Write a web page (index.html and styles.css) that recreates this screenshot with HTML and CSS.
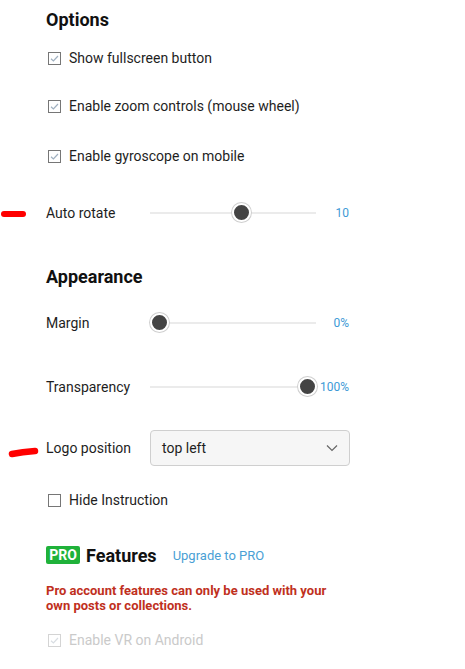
FILE: index.html
```html
<!DOCTYPE html>
<html>
<head>
<meta charset="utf-8">
<link rel="stylesheet" href="styles.css">
</head>
<body>
<div class="page">
  <svg class="mark mark-rotate" width="28" height="10" viewBox="0 0 28 10"><path d="M4 5 L23 5" stroke="#f00" stroke-width="6" stroke-linecap="round"/></svg>
  <svg class="mark mark-logo" width="32" height="12" viewBox="0 0 32 12"><path d="M4 8 Q14 6 27 5" stroke="#f00" stroke-width="6.5" stroke-linecap="round" fill="none"/></svg>

  <h2 class="heading first">Options</h2>

  <label class="check c1">
    <svg class="box" width="13" height="13" viewBox="0 0 13 13"><rect x="0.5" y="0.5" width="12" height="12" fill="#fff" stroke="#767676"/><path d="M3 6.8 L5.4 9 L10 4" fill="none" stroke="#9fb0c0" stroke-width="1.2"/></svg>
    <span>Show fullscreen button</span>
  </label>
  <label class="check c2">
    <svg class="box" width="13" height="13" viewBox="0 0 13 13"><rect x="0.5" y="0.5" width="12" height="12" fill="#fff" stroke="#767676"/><path d="M3 6.8 L5.4 9 L10 4" fill="none" stroke="#9fb0c0" stroke-width="1.2"/></svg>
    <span>Enable zoom controls (mouse wheel)</span>
  </label>
  <label class="check c3">
    <svg class="box" width="13" height="13" viewBox="0 0 13 13"><rect x="0.5" y="0.5" width="12" height="12" fill="#fff" stroke="#767676"/><path d="M3 6.8 L5.4 9 L10 4" fill="none" stroke="#9fb0c0" stroke-width="1.2"/></svg>
    <span>Enable gyroscope on mobile</span>
  </label>

  <div class="field f-rotate">
    <span class="label">Auto rotate</span>
    <div class="slider"><div class="track"></div><div class="thumb" style="left: calc(55.7% - 10px)"></div></div>
    <span class="value">10</span>
  </div>

  <h2 class="heading h-appear">Appearance</h2>

  <div class="field f-margin">
    <span class="label">Margin</span>
    <div class="slider"><div class="track"></div><div class="thumb" style="left: 0px"></div></div>
    <span class="value">0%</span>
  </div>

  <div class="field f-transp">
    <span class="label">Transparency</span>
    <div class="slider"><div class="track"></div><div class="thumb" style="left: calc(100% - 18px)"></div></div>
    <span class="value">100%</span>
  </div>

  <div class="field f-logo">
    <span class="label">Logo position</span>
    <div class="select">
      <span>top left</span>
      <svg width="12" height="8" viewBox="0 0 12 8"><path d="M1 1.5 L6 6.5 L11 1.5" fill="none" stroke="#666" stroke-width="1.2"/></svg>
    </div>
  </div>

  <label class="check c-hide">
    <svg class="box" width="13" height="13" viewBox="0 0 13 13"><rect x="0.5" y="0.5" width="12" height="12" fill="#fff" stroke="#767676"/></svg>
    <span>Hide Instruction</span>
  </label>

  <div class="pro-head">
    <span class="badge">PRO</span>
    <span class="pro-title">Features</span>
    <a class="upgrade">Upgrade to PRO</a>
  </div>

  <p class="warn">Pro account features can only be used with your own posts or collections.</p>

  <label class="check c-vr disabled">
    <svg class="box" width="13" height="13" viewBox="0 0 13 13"><rect x="0.5" y="0.5" width="12" height="12" fill="#fff" stroke="#d4d4d4"/><path d="M3 6.8 L5.4 9 L10 4" fill="none" stroke="#d8dde2" stroke-width="1.2"/></svg>
    <span>Enable VR on Android</span>
  </label>
</div>
</body>
</html>
```

FILE: styles.css
```css
html, body {
  margin: 0;
  padding: 0;
  background: #fff;
}

body {
  font-family: Roboto, "Liberation Sans", sans-serif;
  color: #1e1e1e;
  font-size: 14px;
}

.page {
  position: relative;
  width: 304px;
  padding: 8px 0 0 46px;
  display: flex;
  flex-direction: column;
}

.mark {
  position: absolute;
}
.mark-rotate { left: 0; top: 209px; }
.mark-logo { left: 8px; top: 446px; }

.heading {
  margin: 0;
  height: 24px;
  line-height: 24px;
  font-size: 18px;
  font-weight: 700;
  color: #111;
}

.check {
  display: flex;
  align-items: center;
  height: 24px;
  gap: 8px;
  padding-left: 2px;
}
.check .box { flex: none; }

.c1 { margin-top: 14px; }
.c2 { margin-top: 24px; }
.c3 { margin-top: 26px; }

.field {
  display: flex;
  align-items: center;
  height: 24px;
}
.field .label {
  width: 104px;
  flex: none;
}

.f-rotate { margin-top: 33px; }
.h-appear { margin-top: 40px; }
.f-margin { margin-top: 22px; }
.f-transp { margin-top: 40px; }
.f-logo { margin-top: 31px; height: 36px; }
.c-hide { margin-top: 22px; }

.slider {
  position: relative;
  width: 166px;
  height: 20px;
  flex: none;
}
.track {
  position: absolute;
  left: 0;
  right: 0;
  top: 9px;
  height: 2px;
  background: #ebebeb;
}
.thumb {
  position: absolute;
  top: 0;
  width: 15px;
  height: 15px;
  border-radius: 50%;
  background: #444;
  border: 2px solid #fff;
  box-shadow: 0 0 0 1px #cfcfcf;
}

.value {
  flex: 1;
  text-align: right;
  font-size: 12px;
  color: #3d9ad6;
  padding-right: 1px;
}

.select {
  width: 200px;
  height: 36px;
  box-sizing: border-box;
  border: 1px solid #cfcfcf;
  border-radius: 4px;
  background: #f6f6f6;
  display: flex;
  align-items: center;
  justify-content: space-between;
  padding: 0 11px 0 11px;
  color: #1e1e1e;
}

.pro-head {
  margin-top: 31px;
  height: 24px;
  display: flex;
  align-items: center;
}
.badge {
  background: #1fb23a;
  color: #fff;
  font-weight: 700;
  font-size: 14px;
  line-height: 18px;
  height: 18px;
  padding: 0 3px;
  border-radius: 2px;
  width: 28px;
  text-align: center;
}
.pro-title {
  margin-left: 6px;
  font-size: 18px;
  font-weight: 700;
  color: #111;
}
.upgrade {
  margin-left: 16px;
  font-size: 13px;
  color: #4a9fd5;
}

.warn {
  margin: 16px 0 0 0;
  font-size: 13px;
  line-height: 15px;
  font-weight: 700;
  color: #c0301d;
  width: 290px;
}

.c-vr { margin-top: 15px; }
.disabled { color: #cacaca; }
```
